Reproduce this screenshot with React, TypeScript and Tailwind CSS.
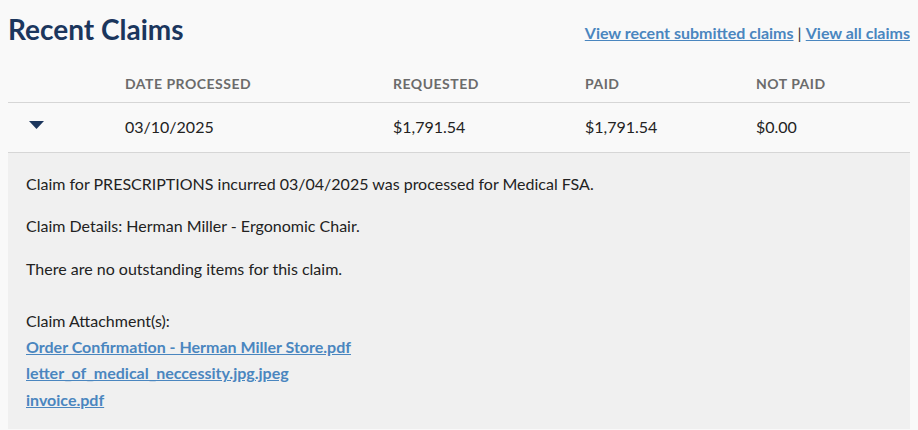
import React from "react";

export default function App() {
  const font = { fontFamily: "Lato, 'Noto Sans', sans-serif" };
  return (
    <div style={font} className="min-h-[430px] w-[918px] bg-[#f9f9f9] px-2 text-[#222]">
      <div className="flex items-end justify-between pt-[12px]">
        <h1 className="text-[28px] font-bold leading-[34px] text-[#1b365d]">Recent Claims</h1>
        <div className="mb-[1px] text-[16px] font-bold text-[#4a86bf]">
          <a href="#" className="underline">View recent submitted claims</a>
          <span className="text-[#333] font-normal"> | </span>
          <a href="#" className="underline">View all claims</a>
        </div>
      </div>
      <div className="mt-[22px] grid h-[35px] grid-cols-[117px_268px_192px_171px_1fr] items-start pt-[5px] border-b border-[#d6d6d6] text-[14px] font-bold uppercase tracking-[0.5px] text-[#6b6b6b]">
        <div></div>
        <div>Date Processed</div>
        <div>Requested</div>
        <div>Paid</div>
        <div>Not Paid</div>
      </div>
      <div className="grid h-[50px] grid-cols-[117px_268px_192px_171px_1fr] items-center border-b border-[#d6d6d6] pb-[2px] text-[16px]">
        <div className="flex pl-[21px]">
          <svg width="15" height="8" viewBox="0 0 15 8" className="-mt-[3px]">
            <polygon points="0,0 15,0 7.5,8" fill="#1b365d" />
          </svg>
        </div>
        <div>03/10/2025</div>
        <div>$1,791.54</div>
        <div>$1,791.54</div>
        <div>$0.00</div>
      </div>
      <div className="bg-[#f0f0f0] px-[18px] pt-[21px] pb-[20px] text-[16px] leading-[19px]">
        <p>Claim for PRESCRIPTIONS incurred 03/04/2025 was processed for Medical FSA.</p>
        <p className="mt-[23px]">Claim Details: Herman Miller - Ergonomic Chair.</p>
        <p className="mt-[24px]">There are no outstanding items for this claim.</p>
        <p className="mt-[33px]">Claim Attachment(s):</p>
        <div className="flex flex-col items-start font-bold text-[#4a86bf]">
          <a href="#" className="mt-[7px] underline">Order Confirmation - Herman Miller Store.pdf</a>
          <a href="#" className="mt-[7px] underline">letter_of_medical_neccessity.jpg.jpeg</a>
          <a href="#" className="mt-[8px] underline">invoice.pdf</a>
        </div>
      </div>
    </div>
  );
}
